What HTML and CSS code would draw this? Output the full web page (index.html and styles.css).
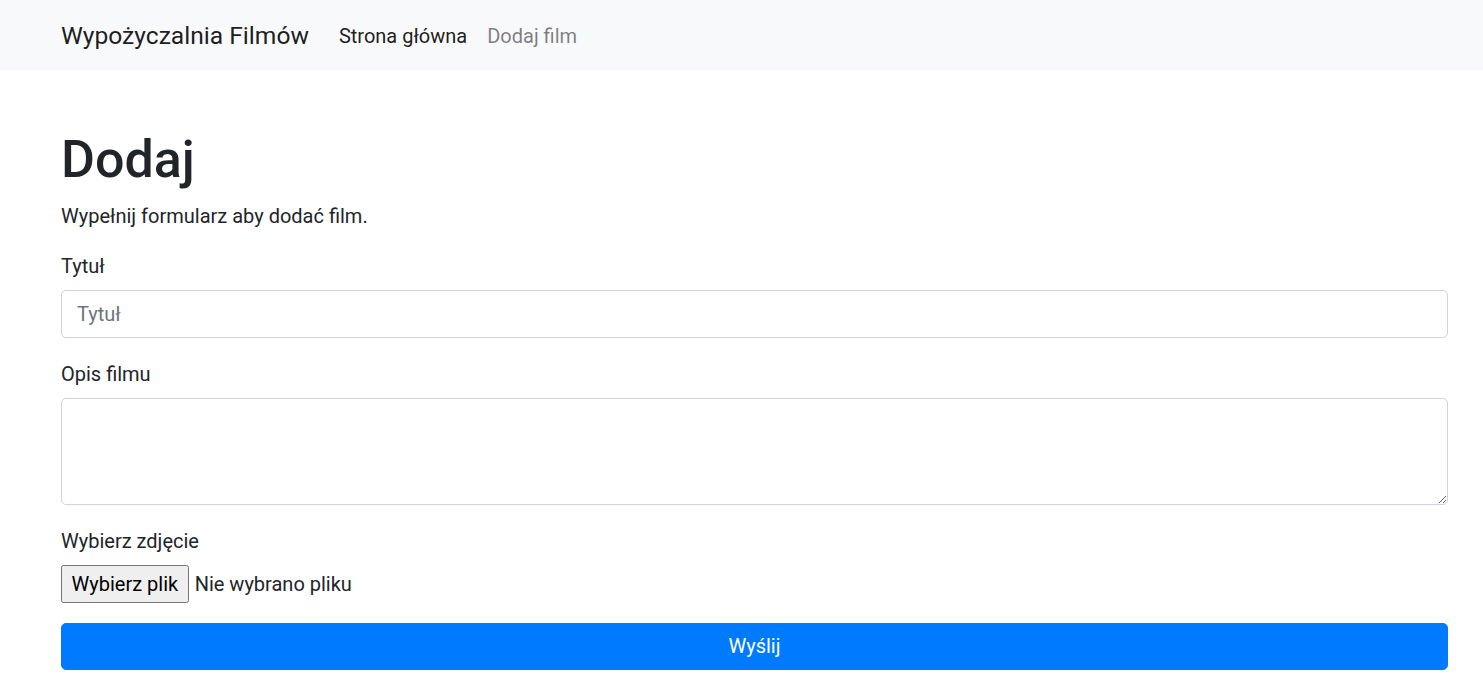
FILE: index.html
```html
<!DOCTYPE html>
<html lang="pl">
<head>
<meta charset="utf-8">
<title>Dodaj film</title>
<link rel="stylesheet" href="styles.css">
</head>
<body>
<nav class="navbar">
  <div class="wrap nav-inner">
    <a class="brand" href="#">Wypożyczalnia Filmów</a>
    <ul class="nav-links">
      <li><a class="nav-link active" href="#">Strona główna</a></li>
      <li><a class="nav-link" href="#">Dodaj film</a></li>
    </ul>
  </div>
</nav>
<main class="wrap content">
  <h1 class="title">Dodaj</h1>
  <p class="lead">Wypełnij formularz aby dodać film.</p>
  <form class="form">
    <div class="form-group">
      <label class="label" for="t">Tytuł</label>
      <input class="control" id="t" type="text" placeholder="Tytuł">
    </div>
    <div class="form-group">
      <label class="label" for="d">Opis filmu</label>
      <textarea class="control area" id="d" rows="3"></textarea>
    </div>
    <div class="form-group">
      <label class="label">Wybierz zdjęcie</label>
      <div class="file">
        <button type="button" class="file-btn">Wybierz plik</button>
        <span class="file-name">Nie wybrano pliku</span>
      </div>
    </div>
    <button type="button" class="submit">Wyślij</button>
  </form>
</main>
</body>
</html>
```
FILE: styles.css
```css
* { box-sizing: border-box; }
html, body { margin: 0; padding: 0; }
body {
  font-family: Roboto, "Liberation Sans", sans-serif;
  font-size: 20px;
  line-height: 1.5;
  color: #212529;
  background: #fff;
}
.wrap { padding: 0 35px 0 61px; }
.navbar { background: #f8f9fa; padding: 10px 0; }
.nav-inner { display: flex; align-items: center; }
.brand {
  font-size: 24.6px;
  line-height: 37.5px;
  padding: 7.25px 0 5.25px;
  margin-right: 20px;
  color: rgba(0,0,0,.9);
  text-decoration: none;
}
.nav-links { display: flex; list-style: none; margin: 0; padding: 0; }
.nav-link {
  display: block;
  padding: 11px 10px 9px;
  color: rgba(0,0,0,.5);
  text-decoration: none;
}
.nav-link.active { color: rgba(0,0,0,.9); }
.content { padding-top: 60px; }
.title {
  font-size: 52px;
  font-weight: 500;
  line-height: 60px;
  margin: 0 0 10px;
}
.lead { margin: 0 0 19px; padding-top: 1px; }
.form { margin: 0; }
.form-group { margin-bottom: 20px; }
.label { display: inline-block; margin-bottom: 9px; padding-top: 1px; }
.control {
  display: block;
  width: 100%;
  height: 47.5px;
  padding: 7.5px 15px;
  font: inherit;
  color: #495057;
  background: #fff;
  border: 1px solid #ced4da;
  border-radius: 5px;
  outline: none;
}
.control::placeholder { color: #6c757d; opacity: 1; }
.area { height: 107px; resize: vertical; }
.file { display: flex; align-items: center; gap: 6px; height: 38px; }
.file-btn {
  height: 38px;
  padding: 0 9.5px;
  font: inherit;
  color: #000;
  background: #efefef;
  border: 1px solid #767676;
  border-radius: 2.5px;
}
.file-name { color: #212529; }
.submit {
  display: block;
  width: 100%;
  height: 47.5px;
  padding: 7.5px 15px;
  font: inherit;
  color: #fff;
  background: #007bff;
  border: 1px solid #007bff;
  border-radius: 5px;
}
```
